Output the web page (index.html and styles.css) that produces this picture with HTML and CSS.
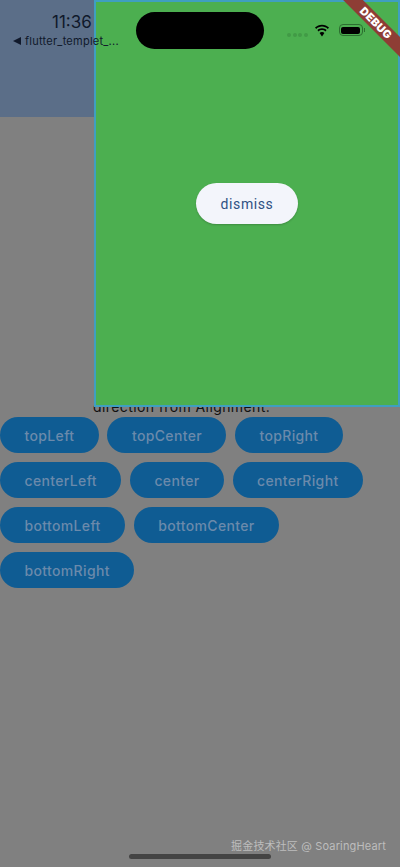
FILE: index.html
```html
<!DOCTYPE html>
<html lang="en">
<head>
    <meta charset="UTF-8">
    <meta name="viewport" content="width=device-width, initial-scale=1.0">
    <title>flutter_templet</title>
    <link rel="stylesheet" href="styles.css">
</head>
<body>
    <div class="page">
        <header class="app-bar"></header>

        <main class="content">
            <p class="caption">direction from Alignment.</p>
            <div class="btn-wrap">
                <button class="align-btn">topLeft</button>
                <button class="align-btn">topCenter</button>
                <button class="align-btn">topRight</button>
                <button class="align-btn">centerLeft</button>
                <button class="align-btn">center</button>
                <button class="align-btn">centerRight</button>
                <button class="align-btn">bottomLeft</button>
                <button class="align-btn">bottomCenter</button>
                <button class="align-btn">bottomRight</button>
            </div>
        </main>

        <section class="sheet">
            <button class="dismiss-btn">dismiss</button>
        </section>

        <div class="status-left">
            <div class="time">11:36</div>
            <div class="back-app">
                <svg class="back-arrow" viewBox="0 0 8 8" width="8" height="8"><path d="M0 4 8 0V8Z"/></svg>
                <span>flutter_templet_...</span>
            </div>
        </div>

        <div class="island"></div>

        <div class="status-right">
            <div class="signal">
                <span></span><span></span><span></span><span></span>
            </div>
            <svg class="wifi" viewBox="0 0 16 13" width="16" height="13">
                <path d="M8 2.600c2.300 0 4.300.9 5.800 2.300L15 3.600C13.200 1.800 10.700.7 8 .7S2.800 1.800 1 3.600l1.200 1.300C3.700 3.500 5.700 2.600 8 2.600Z"/>
                <path d="M8 6.100c1.300 0 2.500.5 3.400 1.300l1.200-1.300C11.400 5 9.800 4.300 8 4.300S4.600 5 3.400 6.100l1.200 1.300C5.500 6.600 6.700 6.100 8 6.100Z"/>
                <path d="M8 7.900c-1 0-1.800.4-2.400 1L8 12.400l2.400-3.500c-.6-.6-1.400-1-2.400-1Z"/>
            </svg>
            <div class="battery"><div class="battery-level"></div></div>
            <div class="battery-cap"></div>
        </div>

        <div class="debug-banner">DEBUG</div>

        <div class="watermark">掘金技术社区 @ SoaringHeart</div>
        <div class="home-bar"></div>
    </div>
</body>
</html>
```

FILE: styles.css
```css
* {
    margin: 0;
    padding: 0;
    box-sizing: border-box;
}

body {
    font-family: Inter, Roboto, "Noto Sans CJK SC", sans-serif;
    background-color: #808080;
}

.page {
    position: relative;
    width: 400px;
    height: 867px;
    overflow: hidden;
    background: #808080;
}

.app-bar {
    height: 117px;
    background: #5b6e88;
}

.content {
    padding-top: 280px;
}

.caption {
    padding-left: 93px;
    height: 20px;
    line-height: 20px;
    font-size: 14px;
    letter-spacing: 0.400px;
    color: #111;
}

.btn-wrap {
    display: flex;
    flex-wrap: wrap;
    gap: 9px 8.500px;
    width: 380px;
}

.align-btn {
    height: 36px;
    padding: 0 24.500px;
    border: none;
    border-radius: 18px;
    background: #0f5c93;
    color: #6b8aab;
    font-family: inherit;
    font-size: 14px;
    font-weight: 500;
    letter-spacing: 0.350px;
}

.sheet {
    position: absolute;
    top: 0;
    left: 94px;
    width: 306px;
    height: 407px;
    background: #4caf50;
    border: 2px solid #3f9fc0;
    display: flex;
    align-items: center;
    justify-content: center;
}

.dismiss-btn {
    width: 102px;
    height: 41px;
    border: none;
    border-radius: 21px;
    background: #f3f5fb;
    color: #2f5183;
    font-family: Roboto, sans-serif;
    font-size: 14px;
    font-weight: 400;
    letter-spacing: 0.600px;
    box-shadow: 0 1px 2px rgba(0,0,0,0.2);
}

.status-left {
    position: absolute;
    top: 12px;
    left: 0;
    width: 130px;
    color: #10192b;
}

.time {
    padding-left: 52px;
    height: 21px;
    line-height: 21px;
    font-size: 17px;
    font-weight: 400;
}

.back-app {
    display: flex;
    align-items: center;
    gap: 4px;
    padding-left: 13px;
    height: 16px;
    font-size: 11px;
    letter-spacing: 0.250px;
    white-space: nowrap;
}

.back-arrow {
    fill: #10192b;
}

.island {
    position: absolute;
    top: 12px;
    left: 136px;
    width: 128px;
    height: 37px;
    border-radius: 19px;
    background: #000;
}

.status-right {
    position: absolute;
    top: 23px;
    left: 287px;
    display: flex;
    align-items: center;
    height: 14px;
}

.signal {
    display: flex;
    gap: 1.500px;
    margin-top: 9px;
    margin-right: 6px;
}

.signal span {
    width: 4px;
    height: 4px;
    border-radius: 50%;
    background: #429a46;
}

.wifi {
    fill: #000;
    margin-right: 9px;
}

.battery {
    width: 24px;
    height: 12px;
    padding: 1.500px;
    border: 1px solid #2c6e30;
    border-radius: 4px;
}

.battery-level {
    height: 100%;
    border-radius: 2px;
    background: #000;
}

.battery-cap {
    width: 1px;
    height: 4px;
    margin-left: 1px;
    background: #2c6e30;
}

.debug-banner {
    position: absolute;
    top: 16px;
    right: -26px;
    width: 100px;
    height: 14px;
    line-height: 14px;
    transform: rotate(45deg);
    background: #8e3d35;
    color: #fff;
    font-family: Inter, sans-serif;
    font-size: 11px;
    font-weight: 900;
    letter-spacing: 0.300px;
    text-align: center;
}

.watermark {
    position: absolute;
    top: 838px;
    right: 14px;
    font-family: Inter, "Noto Sans CJK SC", sans-serif;
    font-size: 11px;
    letter-spacing: 0.150px;
    line-height: 16px;
    color: #bdbdbd;
}

.home-bar {
    position: absolute;
    top: 854px;
    left: 129px;
    width: 142px;
    height: 5px;
    border-radius: 3px;
    background: #444;
}
```
